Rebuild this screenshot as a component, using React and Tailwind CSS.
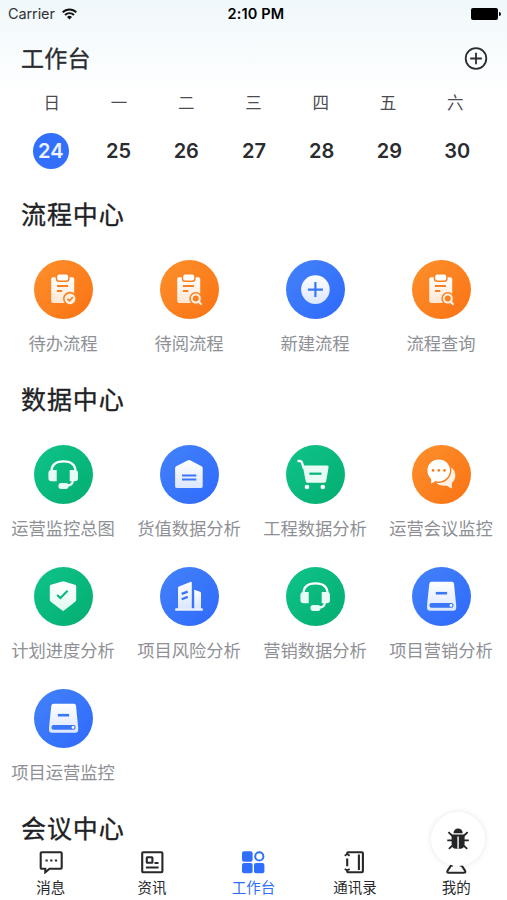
const week = [
  { label: '日', date: 24 },
  { label: '一', date: 25 },
  { label: '二', date: 26 },
  { label: '三', date: 27 },
  { label: '四', date: 28 },
  { label: '五', date: 29 },
  { label: '六', date: 30 },
]

const processItems = [
  { name: '待办流程', color: 'orange', Icon: TodoIcon },
  { name: '待阅流程', color: 'orange', Icon: SearchDocIcon },
  { name: '新建流程', color: 'blue', Icon: AddIcon },
  { name: '流程查询', color: 'orange', Icon: SearchDocIcon },
]

const dataItems = [
  { name: '运营监控总图', color: 'green', Icon: HeadsetIcon },
  { name: '货值数据分析', color: 'blue', Icon: HouseIcon },
  { name: '工程数据分析', color: 'green', Icon: CartIcon },
  { name: '运营会议监控', color: 'orange', Icon: ChatIcon },
  { name: '计划进度分析', color: 'green', Icon: ShieldIcon },
  { name: '项目风险分析', color: 'blue', Icon: BuildingIcon },
  { name: '营销数据分析', color: 'green', Icon: HeadsetIcon },
  { name: '项目营销分析', color: 'blue', Icon: DriveIcon },
  { name: '项目运营监控', color: 'blue', Icon: DriveIcon },
]

const tabs = [
  { name: '消息', Icon: MessageTab },
  { name: '资讯', Icon: NewsTab },
  { name: '工作台', Icon: WorkTab, active: true },
  { name: '通讯录', Icon: ContactsTab },
  { name: '我的', Icon: MineTab },
]

// circle background, the icons cut their details out with currentColor
const colors = {
  orange: 'from-[#fd902b] to-[#fa7212] text-[#fb8022]',
  blue: 'from-[#4382f9] to-[#2f69fb] text-[#3a76f8]',
  green: 'from-[#0fc48b] to-[#04ad70] text-[#0ab87d]',
}

function Clipboard() {
  return (
    <>
      <rect x="17.2" y="17.3" width="23" height="25.8" rx="2" fill="url(#warm)" />
      <rect x="23.2" y="14.6" width="11" height="6" rx="2" fill="#fff" stroke="currentColor" strokeWidth="3" paintOrder="stroke" />
      <path d="M23 26h11M23 30.9h5.3" stroke="currentColor" strokeWidth="2" />
    </>
  )
}

function TodoIcon() {
  return (
    <>
      <Clipboard />
      <circle cx="36" cy="38.8" r="7" fill="currentColor" />
      <circle cx="36" cy="38.8" r="5.4" fill="#fff1e4" />
      <path d="M33.4 38.8l2 2 3.4-3.6" stroke="currentColor" strokeWidth="1.8" fill="none" />
    </>
  )
}

function SearchDocIcon() {
  return (
    <>
      <Clipboard />
      <circle cx="35.8" cy="38.6" r="6.5" fill="currentColor" />
      <circle cx="35.8" cy="38.6" r="4" fill="none" stroke="#fff1e4" strokeWidth="2" />
      <path d="M38.5 41.4l2.4 2.5" stroke="#fff1e4" strokeWidth="2.1" strokeLinecap="round" />
    </>
  )
}

function AddIcon() {
  return (
    <>
      <circle cx="29.4" cy="29.6" r="14.3" fill="url(#cool)" />
      <path d="M21.9 29.6h15M29.4 22.1v15" stroke="currentColor" strokeWidth="2.2" />
    </>
  )
}

function HeadsetIcon() {
  return (
    <>
      <path d="M17.4 27C17.4 20 22 16.3 29.5 16.3S41.6 20 41.6 27" fill="none" stroke="#fff" strokeWidth="2.2" />
      <path d="M22.7 25v11.2h-5a3.3 3.3 0 0 1-3.3-3.3v-4.6A3.3 3.3 0 0 1 17.7 25zM35.7 25v11.2h5a3.3 3.3 0 0 0 3.3-3.3v-4.6a3.3 3.3 0 0 0-3.3-3.3z" fill="#e9fbf5" />
      <path d="M38.8 35.5c0 3.5-2.2 4.9-5.6 4.9" fill="none" stroke="#e9fbf5" strokeWidth="2.2" />
      <rect x="24.4" y="38.1" width="10.2" height="5.9" rx="2.9" fill="#e9fbf5" />
    </>
  )
}

function HouseIcon() {
  return (
    <>
      <path d="M28 15.3q1-.7 2 0l11.6 6q1.1.6 1.1 1.9v18q0 1.9-1.9 1.9H17q-1.9 0-1.9-1.9v-18q0-1.3 1.1-1.9z" fill="url(#cool)" />
      <path d="M22 30.4h14.3M22 34.6h14.3" stroke="currentColor" strokeWidth="2" />
    </>
  )
}

function CartIcon() {
  return (
    <>
      <path d="M12.4 16h1.4q1.8 0 2.3 1.8l1.4 5" fill="none" stroke="#fff" strokeWidth="2.3" strokeLinecap="round" />
      <path d="M16.7 20.6h24.6q1.6 0 1.3 1.5l-2.4 14q-.3 1.7-2 1.7H21.5q-1.5 0-1.8-1.5z" fill="#e9fbf5" />
      <path d="M23.4 28.7h12" stroke="currentColor" strokeWidth="2.3" />
      <circle cx="21" cy="42" r="2.3" fill="#fff" />
      <circle cx="36.8" cy="42" r="2.3" fill="#fff" />
    </>
  )
}

function ChatIcon() {
  return (
    <>
      <path d="M39 22.3c3.2 2.3 4.5 5.5 4.3 8.6-.1 2.7-1.3 5-3.3 6.8q-.4 3 .1 5.7-3.2-.8-5.3-2.8c-4.4.7-7.9-.3-10.3-2.5z" fill="#fff1e4" />
      <path d="M26.7 14.6c6.4 0 11.3 4.7 11.3 10.7s-4.9 11.2-11.3 11.2q-1.7 0-3.3-.5-2 1.8-4.5 2.5.6-2.6.1-4.8c-2.3-2-3.6-4.8-3.6-8.2 0-6.2 4.9-10.9 11.3-10.9z" fill="#fff" stroke="currentColor" strokeWidth="2.8" paintOrder="stroke" />
      <g fill="currentColor">
        <circle cx="21.1" cy="25.4" r="1.4" />
        <circle cx="26.8" cy="25.4" r="1.4" />
        <circle cx="32.5" cy="25.4" r="1.4" />
      </g>
    </>
  )
}

function ShieldIcon() {
  return (
    <>
      <path d="M28.3 14.6q.9-.3 1.8 0L41 17.8q1.2.4 1.2 1.6v13.4q0 1.5-1.3 2.3L30 43.6q-.9.6-1.8 0l-11.1-8.5q-1.3-.8-1.3-2.3V19.4q0-1.2 1.2-1.6z" fill="url(#mint)" />
      <path d="M23.2 28l3.2 3 7.2-7.2" fill="none" stroke="currentColor" strokeWidth="2.1" />
    </>
  )
}

function BuildingIcon() {
  return (
    <>
      <path d="M18 20.8q0-1 1-1.4l11.2-4.5q1.6-.6 1.6 1v26H18z" fill="url(#cool)" />
      <path d="M34.2 22.8l5.8 1.9q1 .3 1 1.4v16h-6.8z" fill="url(#cool)" />
      <rect x="15.2" y="41.3" width="27.6" height="2.5" rx=".6" fill="#e9effd" />
      <path d="M21.7 26.9l6-2.3M21.7 32.2l6-2.3" stroke="currentColor" strokeWidth="2.2" />
    </>
  )
}

function DriveIcon() {
  return (
    <>
      <path d="M19.6 14.7h20.2q2 0 2.2 2l2.2 21.7v2.3q0 3-3 3H18q-3 0-3-3v-2.3l2.3-21.7q.3-2 2.3-2z" fill="url(#cool)" />
      <path d="M23.8 26.2h11.3" stroke="currentColor" strokeWidth="2.6" />
      <rect x="17.5" y="36" width="24" height="4.8" rx="2" fill="currentColor" />
      <circle cx="39" cy="38.4" r="1.4" fill="#fff" />
    </>
  )
}

function MessageTab() {
  return (
    <svg width="24" height="24" viewBox="0 0 24 24" fill="none" stroke="currentColor" strokeWidth="2.1">
      <path d="M2.7 2.3h19a1 1 0 0 1 1 1v14.5a1 1 0 0 1-1 1H10.5l-4.2 3.5v-3.5H2.7a1 1 0 0 1-1-1V3.3a1 1 0 0 1 1-1z" />
      <path d="M6.5 10.5h2.2M11.2 10.5h2.2M15.9 10.5h2.2" />
    </svg>
  )
}

function NewsTab() {
  return (
    <svg width="24" height="24" viewBox="0 0 24 24" fill="none" stroke="currentColor" strokeWidth="2.1">
      <rect x="2.2" y="2.3" width="20.2" height="20" rx="1" />
      <rect x="6.8" y="7.2" width="5.6" height="5.6" rx=".5" />
      <path d="M14.5 13h4M5.9 17.5h12.7" />
    </svg>
  )
}

function WorkTab() {
  return (
    <svg width="24" height="24" viewBox="0 0 24 24" fill="currentColor">
      <rect x="1" y="1.3" width="10.6" height="10.4" rx="2" />
      <rect x="1" y="12.9" width="10.6" height="10.4" rx="2" />
      <rect x="13" y="12.9" width="10.4" height="10.4" rx="2" />
      <circle cx="18.3" cy="6.4" r="4.1" fill="none" stroke="currentColor" strokeWidth="2" />
    </svg>
  )
}

function ContactsTab() {
  return (
    <svg width="24" height="24" viewBox="0 0 24 24" fill="none" stroke="currentColor" strokeWidth="2.1">
      <path d="M4.2 4.8V3.3a1 1 0 0 1 1-1h13.7a1 1 0 0 1 1 1v18a1 1 0 0 1-1 1H5.2a1 1 0 0 1-1-1v-1.5" />
      <path d="M4.2 8.6v7.6M15.9 4.5v15.6" />
      <path d="M1.7 5.7l2.5-1.6 2.5 1.6M1.7 18.9l2.5 1.3 2.5-1.3" strokeWidth="1.7" />
    </svg>
  )
}

function MineTab() {
  return (
    <svg width="24" height="24" viewBox="0 0 24 24" fill="none" stroke="currentColor" strokeWidth="2.1">
      <circle cx="12.4" cy="7" r="4.6" />
      <path d="M9 15.5H7L3.6 20.6q-1.1 2.2 1.2 2.2h15q2.3 0 1.2-2.2l-3.4-5.1h-2" />
    </svg>
  )
}

function BugIcon() {
  return (
    <svg width="24" height="24" viewBox="0 0 24 24" fill="#242526" stroke="#242526">
      <path d="M7.5 6.2a4.6 4.8 0 0 1 9.2 0z" stroke="none" />
      <path d="M5.6 7.6h13v8.6q0 5.5-4.6 5.5h-3.800q-4.600 0-4.600-5.500z" stroke="none" />
      <path d="M12.1 9.500v12.200" stroke="#e4e4e4" strokeWidth="1.6" />
      <path d="M2.4 5.200L6.500 9M21.700 5.200L17.600 9M1.300 13.300h5.200M22.800 13.300h-5.200M2.900 21.900l4.200-4M21.200 21.900l-4.200-4" fill="none" strokeWidth="1.8" />
    </svg>
  )
}

function Section({ title, items = [] }) {
  return (
    <section>
      <h2 className="pl-[21px] h-9 leading-9 text-[25px] tracking-[0.9px] [-webkit-text-stroke:0.35px] text-[#202124]">{title}</h2>
      <div className="grid grid-cols-4 gap-y-[17px] pt-[27px] pr-[3px]">
        {items.map(({ name, color, Icon }) => (
          <div key={name} className="flex flex-col items-center h-[105px]">
            <div className={`ml-px size-[59px] rounded-full bg-linear-to-br ${colors[color]}`}>
              <svg width="59" height="59" viewBox="0 0 59 59">
                <Icon />
              </svg>
            </div>
            <span className="mt-[13px] leading-6 text-[17.3px] whitespace-nowrap text-[#8e9095]">{name}</span>
          </div>
        ))}
      </div>
    </section>
  )
}

export default function App() {
  return (
    <div className="relative flex flex-col w-[507px] h-[900px] overflow-hidden bg-white bg-linear-to-b from-[#f0f8fb] to-white to-[95px] font-['Inter','Noto_Sans_CJK_SC',sans-serif] text-[#2b2c2f]">
      {/* shared icon gradients */}
      <svg className="absolute size-0">
        <defs>
          <linearGradient id="warm" x1="0" y1="0" x2="0" y2="1">
            <stop stopColor="#fff" />
            <stop offset="1" stopColor="#ffe6d2" />
          </linearGradient>
          <linearGradient id="cool" x1="0" y1="0" x2="0" y2="1">
            <stop stopColor="#fff" />
            <stop offset="1" stopColor="#dbe6fe" />
          </linearGradient>
          <linearGradient id="mint" x1="0" y1="0" x2="0" y2="1">
            <stop stopColor="#fff" />
            <stop offset="1" stopColor="#e0f9f0" />
          </linearGradient>
        </defs>
      </svg>

      <div className="grid grid-cols-3 items-center h-[27px] shrink-0 pl-2 pr-[6px] text-[14.5px]">
        <div className="flex items-center gap-[7px] text-[#303236]">
          <span className="tracking-[-0.1px]">Carrier</span>
          <svg width="15" height="12" viewBox="0 0 15 12" fill="none" stroke="#111" strokeWidth="1.9">
            <path d="M.7 4.3a9.6 9.6 0 0 1 13.6 0M3 7a6.4 6.4 0 0 1 9 0" />
            <path d="M7.5 11.5L5 9a3.5 3.5 0 0 1 5 0z" fill="#111" stroke="none" />
          </svg>
        </div>
        <span className="pl-[3px] text-center font-semibold tracking-[0.15px] text-black">2:10 PM</span>
        <div className="flex items-center justify-end gap-px">
          <div className="w-[27px] h-3 rounded-[2px] bg-black" />
          <div className="w-[2px] h-1 rounded-r bg-black" />
        </div>
      </div>

      <header className="flex items-center justify-between h-[63px] shrink-0 pl-[21px] pr-[19px]">
        <h1 className="pt-[2px] text-[23px] tracking-[0.3px] [-webkit-text-stroke:0.3px]">工作台</h1>
        <svg width="24" height="24" viewBox="0 0 24 24" fill="none" stroke="#2c2d30" strokeWidth="1.8">
          <circle cx="12" cy="11.5" r="10.3" />
          <path d="M6.2 11.5h11.6M12 5.7v11.6" />
        </svg>
      </header>

      <div className="shrink-0 h-[107px]">
        <div className="grid grid-cols-7 px-[18px]">
          {week.map(({ label }) => (
            <span key={label} className="h-[26px] leading-[27px] text-center text-[16.5px] text-[#4b4c50]">{label}</span>
          ))}
        </div>
        <div className="grid grid-cols-7 justify-items-center mt-[17px] pl-[17px] pr-4">
          {week.map(({ date }) => (
            <span
              key={date}
              className={`size-9 rounded-full text-center leading-9 text-[20px] font-semibold ${date === 24 ? 'bg-[#316ffc] text-[#eef4ff]' : ''}`}
            >
              {date}
            </span>
          ))}
        </div>
      </div>

      <main className="flex flex-col grow min-h-0">
        <Section title="流程中心" items={processItems} />
        <div className="h-[17px] shrink-0" />
        <Section title="数据中心" items={dataItems} />
        <div className="h-[17px] shrink-0" />
        <Section title="会议中心" />
      </main>

      <nav className="grid grid-cols-5 absolute inset-x-0 bottom-0 h-[50px] bg-white">
        {tabs.map(({ name, Icon, active }) => (
          <div key={name} className={`flex flex-col items-center ${active ? 'text-[#2f6ffb]' : 'text-[#27282b]'}`}>
            <Icon />
            <span className="mt-1 leading-5 text-[14.5px]">{name}</span>
          </div>
        ))}
      </nav>

      <button className="absolute left-[431px] top-[812px] flex items-center justify-center size-[54px] rounded-full bg-white shadow-[0_0_6px_rgba(0,0,0,0.1)]">
        <BugIcon />
      </button>
    </div>
  )
}
